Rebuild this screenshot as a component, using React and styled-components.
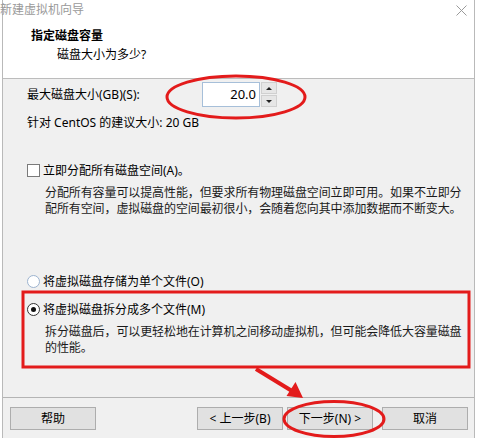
import React from 'react'
import styled, { createGlobalStyle } from 'styled-components'

const GlobalStyle = createGlobalStyle`
  html, body { margin: 0; padding: 0; background: #fff; }
  body {
    font-family: "Noto Sans", "Noto Sans CJK SC", sans-serif;
    font-size: 12px;
    color: #000;
  }
`

const Window = styled.div`
  position: relative;
  width: 478px;
  height: 438px;
  overflow: hidden;
  background: #fff;
`

const Frame = styled.div`
  margin-left: 2px;
  width: 471px;
  height: 438px;
  border-left: 1px solid #b9b9b9;
  border-right: 1px solid #b9b9b9;
  display: flex;
  flex-direction: column;
`

const TitleBar = styled.div`
  height: 20px;
  display: flex;
  align-items: center;
  justify-content: space-between;
  padding-right: 7px;
`

const TitleText = styled.span`
  margin-left: -3px;
  color: #9a9a9a;
  font-size: 12px;
  line-height: 16px;
`

const Header = styled.div`
  height: 59px;
  box-sizing: border-box;
  padding-top: 8px;
  border-bottom: 1px solid #bcbcbc;
`

const HeadTitle = styled.div`
  padding-left: 28px;
  font-weight: 700;
  line-height: 16px;
`

const HeadSub = styled.div`
  margin-top: 3px;
  padding-left: 54px;
  line-height: 16px;
`

const Body = styled.div`
  flex: 1;
  background: #f0f0f0;
  padding: 3px 0 0 24px;
`

const SizeRow = styled.div`
  display: flex;
  align-items: center;
  height: 25px;
`

const Label = styled.span`
  width: 175px;
  line-height: 16px;
`

const SpinBox = styled.div`
  display: flex;
  height: 25px;
`

const SpinInput = styled.div`
  width: 58px;
  box-sizing: border-box;
  border: 1px solid #a6bfd9;
  background: #fff;
  text-align: right;
  padding-right: 3px;
  font-size: 13px;
  line-height: 23px;
`

const SpinButtons = styled.div`
  width: 16px;
  display: flex;
  flex-direction: column;
  gap: 1px;
  margin-left: 1px;
`

const SpinBtn = styled.div`
  flex: 1;
  background: #e6e6e6;
  border: 1px solid #d0d0d0;
  display: flex;
  align-items: center;
  justify-content: center;
  &::after {
    content: '';
    border-left: 3px solid transparent;
    border-right: 3px solid transparent;
    ${p => p.$down ? 'border-top: 3px solid #222;' : 'border-bottom: 3px solid #222;'}
  }
`

const Line = styled.div`
  margin-top: ${p => p.$top || 0}px;
  line-height: 16px;
`

const OptionRow = styled.div`
  display: flex;
  align-items: center;
  height: 16px;
  margin-top: ${p => p.$top || 0}px;
`

const CheckBox = styled.span`
  width: 11px;
  height: 11px;
  border: 1px solid #7a7a7a;
  background: #fff;
  margin-right: 3px;
`

const Radio = styled.span`
  width: 11px;
  height: 11px;
  border-radius: 50%;
  border: 1px solid ${p => p.$checked ? '#333' : '#9cb3cf'};
  background: #fff;
  margin-right: 3px;
  display: flex;
  align-items: center;
  justify-content: center;
  &::after {
    content: '';
    display: ${p => p.$checked ? 'block' : 'none'};
    width: 5px;
    height: 5px;
    border-radius: 50%;
    background: #111;
  }
`

const Desc = styled.p`
  margin: 7px 0 0;
  padding-left: 18px;
  line-height: 16px;
  letter-spacing: -0.1px;
  white-space: nowrap;
  color: #1a1a1a;
`

const Footer = styled.div`
  height: 39px;
  border-top: 1px solid #b4b4b4;
  background: #f0f0f0;
  display: flex;
  align-items: center;
  padding: 1px 6px 0 7px;
`

const Button = styled.div`
  width: 86px;
  height: 23px;
  box-sizing: border-box;
  margin-left: ${p => p.$gap || 0}px;
  background: #e1e1e1;
  border: 1px solid #adadad;
  display: flex;
  align-items: center;
  justify-content: center;
  line-height: 16px;
`

const Spacer = styled.div`
  flex: 1;
`

const Marks = styled.svg`
  position: absolute;
  left: 0;
  top: 0;
  pointer-events: none;
`

function Annotations() {
  const red = '#e31b1b'
  return (
    <Marks width="478" height="438" viewBox="0 0 478 438">
      <ellipse cx="236" cy="97" rx="69" ry="21" fill="none" stroke={red} strokeWidth="3" />
      <rect x="23" y="292" width="446" height="75" fill="none" stroke={red} strokeWidth="3" />
      <line x1="256" y1="369" x2="292" y2="391" stroke={red} strokeWidth="4" />
      <polygon points="303,398 286.5,396 295.5,382" fill={red} />
      <ellipse cx="334" cy="419" rx="50" ry="17.5" fill="none" stroke={red} strokeWidth="3" />
    </Marks>
  )
}

export default function App() {
  return (
    <>
      <GlobalStyle />
      <Window>
        <Frame>
          <TitleBar>
            <TitleText>新建虚拟机向导</TitleText>
            <svg width="11" height="11" viewBox="0 0 11 11">
              <path d="M0.5 0.5 L10.5 10.5 M10.5 0.5 L0.5 10.5" stroke="#9a9a9a" strokeWidth="1" />
            </svg>
          </TitleBar>
          <Header>
            <HeadTitle>指定磁盘容量</HeadTitle>
            <HeadSub>磁盘大小为多少?</HeadSub>
          </Header>
          <Body>
            <SizeRow>
              <Label>最大磁盘大小(GB)(S):</Label>
              <SpinBox>
                <SpinInput>20.0</SpinInput>
                <SpinButtons>
                  <SpinBtn />
                  <SpinBtn $down />
                </SpinButtons>
              </SpinBox>
            </SizeRow>
            <Line $top={8}>针对 CentOS 的建议大小: 20 GB</Line>
            <OptionRow $top={31}>
              <CheckBox />
              <span>立即分配所有磁盘空间(A)。</span>
            </OptionRow>
            <Desc>
              分配所有容量可以提高性能，但要求所有物理磁盘空间立即可用。如果不立即分
              <br />
              配所有空间，虚拟磁盘的空间最初很小，会随着您向其中添加数据而不断变大。
            </Desc>
            <OptionRow $top={56}>
              <Radio />
              <span>将虚拟磁盘存储为单个文件(O)</span>
            </OptionRow>
            <OptionRow $top={12}>
              <Radio $checked />
              <span>将虚拟磁盘拆分成多个文件(M)</span>
            </OptionRow>
            <Desc>
              拆分磁盘后，可以更轻松地在计算机之间移动虚拟机，但可能会降低大容量磁盘
              <br />
              的性能。
            </Desc>
          </Body>
          <Footer>
            <Button>帮助</Button>
            <Spacer />
            <Button>&lt; 上一步(B)</Button>
            <Button $gap={4}>下一步(N) &gt;</Button>
            <Button $gap={9}>取消</Button>
          </Footer>
        </Frame>
        <Annotations />
      </Window>
    </>
  )
}
